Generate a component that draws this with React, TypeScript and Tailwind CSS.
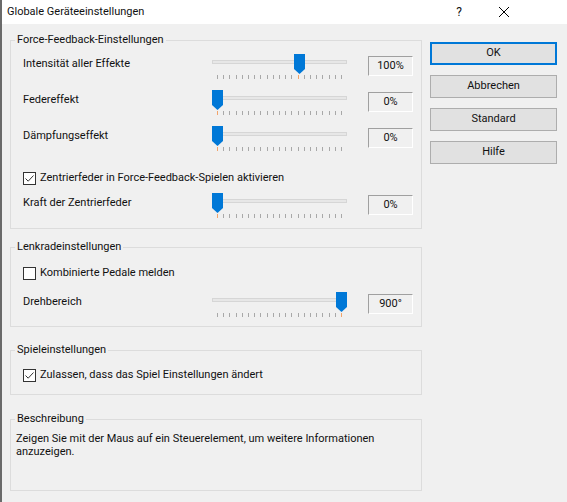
const TICKS = Array.from({ length: 21 }, (_, i) => 5 + Math.round(i * 6.2));

// pos = left offset of the thumb inside the 135px slider (0..124)
const Slider = ({ pos }: { pos: number }) => {
  const center = pos + 5;
  return (
    <svg width="135" height="28" viewBox="0 0 135 28" className="shrink-0">
      <rect x="0.5" y="6.5" width="134" height="3" fill="#e7e7e7" stroke="#d6d6d6" />
      {TICKS.map((x) => (
        <line
          key={x}
          x1={x + 0.5}
          x2={x + 0.5}
          y1="21"
          y2="25"
          stroke={Math.abs(x - center) < 3 ? "#f2a36a" : "#a8a8a8"}
          strokeWidth="1"
        />
      ))}
      <polygon points={`${pos},0 ${pos + 11},0 ${pos + 11},15 ${pos + 5.5},20 ${pos},15`} fill="#0078d7" />
    </svg>
  );
};

const SliderRow = ({ label, pos, value, className = "" }: { label: string; pos: number; value: string; className?: string }) => (
  <div className={`flex h-[28px] items-start ${className}`}>
    <div className="w-[189px] leading-[20px]">{label}</div>
    <Slider pos={pos} />
    <div className="ml-[21px] mt-[2px] flex h-[20px] w-[45px] items-center justify-center border border-t-[#a0a0a0] border-l-[#a0a0a0] border-b-white border-r-white">
      {value}
    </div>
  </div>
);

const Check = ({ checked, label, className = "" }: { checked: boolean; label: string; className?: string }) => (
  <div className={`flex h-[14px] items-center ${className}`}>
    <div className="flex h-[13px] w-[13px] items-center justify-center border border-[#333333] bg-white">
      {checked && (
        <svg width="11" height="11" viewBox="0 0 11 11">
          <path d="M1.5 5.5 L4.2 8.2 L9.5 2.5" fill="none" stroke="#333333" strokeWidth="1" />
        </svg>
      )}
    </div>
    <span className="ml-[4px] leading-[14px]">{label}</span>
  </div>
);

const Group = ({ title, className = "", children }: { title: string; className?: string; children: React.ReactNode }) => (
  <fieldset className={`w-[412px] border border-[#dcdcdc] ${className}`}>
    <legend className="ml-[4px] px-[2px] leading-[14px]">{title}</legend>
    {children}
  </fieldset>
);

export default function App() {
  return (
    <div className="h-[502px] w-[567px] overflow-hidden border-l-2 border-[#6a6a6a] bg-[#f0f0f0] text-[11px] text-[#111111] font-['Segoe_UI',Roboto,'Liberation_Sans',sans-serif]">
      {/* title bar */}
      <div className="flex h-[24px] items-center bg-white">
        <div className="flex-1 pl-[5px] text-[11px]">Globale Geräteeinstellungen</div>
        <div className="flex w-[46px] justify-center text-[12px]">?</div>
        <div className="flex w-[44px] justify-center">
          <svg width="10" height="10" viewBox="0 0 10 10">
            <path d="M0 0 L10 10 M10 0 L0 10" stroke="#000" strokeWidth="1" />
          </svg>
        </div>
        <div className="w-[41px]" />
      </div>

      <div className="flex">
        <div className="ml-[8px] pt-[9px]">
          <Group title="Force-Feedback-Einstellungen">
            <div className="pl-[12px] pt-[7px] pb-[7px]">
              <SliderRow label="Intensität aller Effekte" pos={82} value="100%" />
              <SliderRow label="Federeffekt" pos={0} value="0%" className="mt-[8px]" />
              <SliderRow label="Dämpfungseffekt" pos={0} value="0%" className="mt-[8px]" />
              <Check checked label="Zentrierfeder in Force-Feedback-Spielen aktivieren" className="mt-[17px]" />
              <SliderRow label="Kraft der Zentrierfeder" pos={0} value="0%" className="mt-[8px]" />
            </div>
          </Group>

          <Group title="Lenkradeinstellungen" className="mt-[11px]">
            <div className="pl-[12px] pt-[12px] pb-[6px]">
              <Check checked={false} label="Kombinierte Pedale melden" />
              <SliderRow label="Drehbereich" pos={124} value="900°" className="mt-[12px]" />
            </div>
          </Group>

          <Group title="Spieleinstellungen" className="mt-[16px]">
            <div className="pl-[12px] pt-[11px] pb-[12px]">
              <Check checked label="Zulassen, dass das Spiel Einstellungen ändert" />
            </div>
          </Group>

          <Group title="Beschreibung" className="mt-[17px]">
            <div className="h-[64px] pl-[5px] pt-[6px]">
              <p className="w-[370px] leading-[13px]">
                Zeigen Sie mit der Maus auf ein Steuerelement, um weitere Informationen anzuzeigen.
              </p>
            </div>
          </Group>
        </div>

        <div className="ml-[8px] flex w-[127px] flex-col gap-[10px] pt-[18px]">
          <button className="h-[23px] border-2 border-[#0078d7] bg-[#e1e1e1]">OK</button>
          <button className="h-[23px] border border-[#adadad] bg-[#e1e1e1]">Abbrechen</button>
          <button className="h-[23px] border border-[#adadad] bg-[#e1e1e1]">Standard</button>
          <button className="h-[23px] border border-[#adadad] bg-[#e1e1e1]">Hilfe</button>
        </div>
      </div>
    </div>
  );
}
